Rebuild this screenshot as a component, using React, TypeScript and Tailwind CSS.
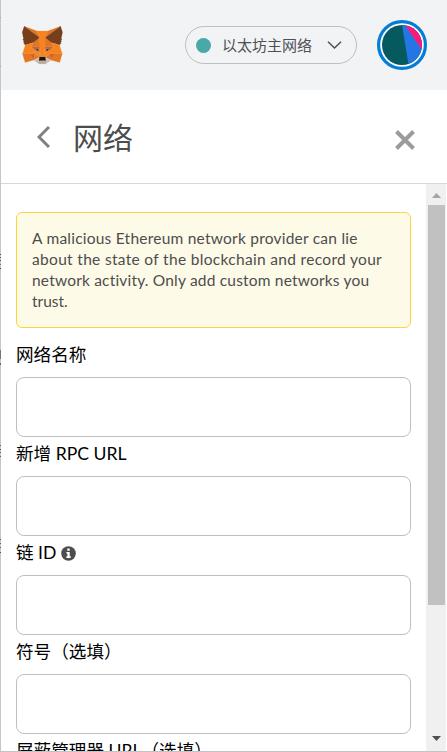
import type { ReactNode } from "react";

const FOX: [string, string][] = [
  ["#E17726", "M32.958 1L19.824 10.718L22.267 4.991L32.958 1Z"],
  ["#E27625", "M2.663 1L15.68 10.809L13.351 4.991L2.663 1Z"],
  ["#E27625", "M28.23 23.534L24.735 28.873L32.218 30.932L34.362 23.65L28.23 23.534Z"],
  ["#E27625", "M1.273 23.65L3.404 30.932L10.874 28.873L7.392 23.534L1.273 23.65Z"],
  ["#E27625", "M10.471 14.515L8.392 17.651L15.797 17.987L15.55 9.997L10.471 14.515Z"],
  ["#E27625", "M25.151 14.515L19.993 9.906L19.824 17.987L27.229 17.651L25.151 14.515Z"],
  ["#E27625", "M10.873 28.873L15.355 26.704L11.497 23.689L10.873 28.873Z"],
  ["#E27625", "M20.266 26.704L24.734 28.873L24.123 23.689L20.266 26.704Z"],
  ["#D5BFB2", "M24.734 28.873L20.266 26.704L20.629 29.609L20.59 30.841L24.734 28.873Z"],
  ["#D5BFB2", "M10.873 28.873L15.03 30.841L15.004 29.609L15.355 26.704L10.873 28.873Z"],
  ["#233447", "M15.108 21.786L11.393 20.694L14.017 19.489L15.108 21.786Z"],
  ["#233447", "M20.512 21.786L21.604 19.489L24.24 20.694L20.512 21.786Z"],
  ["#CC6228", "M10.873 28.873L11.523 23.534L7.392 23.65L10.873 28.873Z"],
  ["#CC6228", "M24.098 23.534L24.734 28.873L28.229 23.65L24.098 23.534Z"],
  ["#CC6228", "M27.229 17.651L19.824 17.987L20.512 21.786L21.604 19.489L24.24 20.694L27.229 17.651Z"],
  ["#CC6228", "M11.393 20.694L14.017 19.489L15.108 21.786L15.797 17.987L8.392 17.651L11.393 20.694Z"],
  ["#E27525", "M8.392 17.651L11.497 23.689L11.393 20.694L8.392 17.651Z"],
  ["#E27525", "M24.24 20.694L24.123 23.689L27.229 17.651L24.24 20.694Z"],
  ["#E27525", "M15.797 17.987L15.108 21.786L15.979 26.237L16.174 20.37L15.797 17.987Z"],
  ["#E27525", "M19.824 17.987L19.46 20.357L19.642 26.237L20.512 21.786L19.824 17.987Z"],
  ["#F5841F", "M20.512 21.786L19.642 26.237L20.266 26.704L24.123 23.689L24.24 20.694L20.512 21.786Z"],
  ["#F5841F", "M11.393 20.694L11.497 23.689L15.355 26.704L15.979 26.237L15.108 21.786L11.393 20.694Z"],
  ["#C0AC9D", "M20.59 30.841L20.629 29.609L20.292 29.324H15.328L15.004 29.609L15.03 30.841L10.873 28.873L12.329 30.065L15.276 32.099H20.331L23.292 30.065L24.734 28.873L20.59 30.841Z"],
  ["#161616", "M20.266 26.704L19.642 26.237H15.979L15.355 26.704L15.004 29.609L15.328 29.324H20.292L20.629 29.609L20.266 26.704Z"],
  ["#763E1A", "M33.517 11.353L34.621 5.99L32.958 1L20.266 10.394L25.151 14.515L32.049 16.525L33.569 14.748L32.907 14.268L33.959 13.309L33.153 12.686L34.206 11.882L33.517 11.353Z"],
  ["#763E1A", "M1 5.99L2.117 11.353L1.403 11.882L2.468 12.686L1.663 13.309L2.715 14.268L2.053 14.748L3.573 16.525L10.471 14.515L15.355 10.394L2.663 1L1 5.99Z"],
  ["#F5841F", "M32.049 16.525L25.151 14.515L27.229 17.651L24.123 23.689L28.23 23.637H34.362L32.049 16.525Z"],
  ["#F5841F", "M10.471 14.515L3.573 16.525L1.273 23.637H7.392L11.497 23.689L8.392 17.651L10.471 14.515Z"],
  ["#F5841F", "M19.824 17.987L20.266 10.394L22.267 4.991H13.351L15.355 10.394L15.797 17.987L15.966 20.383L15.979 26.237H19.642L19.655 20.383L19.824 17.987Z"],
];

// Slivers of the page behind the popup, visible through its left edge: y, height, colour.
const EDGE: [number, number, string][] = [
  [17, 1, "#e08a80"],
  [66, 1, "#e08a80"],
  [254, 1, "#555"],
  [257, 1, "#666"],
  [260, 1, "#555"],
  [264, 1, "#777"],
  [268, 1, "#555"],
  [350, 9, "#777"],
  [363, 2, "#666"],
  [445, 1, "#666"],
  [449, 1, "#555"],
  [452, 1, "#666"],
  [456, 1, "#666"],
  [539, 1, "#666"],
  [543, 1, "#666"],
  [547, 1, "#666"],
  [552, 1, "#555"],
];

function Fox() {
  return (
    <svg className="mt-[25px] ml-[20px] h-10 w-[42px] shrink-0" viewBox="0 0 35 33" preserveAspectRatio="none">
      {FOX.map(([fill, d]) => (
        <path key={d} d={d} fill={fill} stroke={fill} strokeWidth="0.15" />
      ))}
    </svg>
  );
}

function Avatar() {
  return (
    <svg className="mt-5 mr-5 ml-5 size-[50px] shrink-0" viewBox="0 0 50 50">
      <defs>
        <clipPath id="avatar">
          <circle cx="25" cy="25" r="20" />
        </clipPath>
      </defs>
      <circle cx="25" cy="25" r="23.4" fill="#fff" stroke="#037dd6" strokeWidth="3.2" />
      <g clipPath="url(#avatar)">
        <path d="M0 0H50V50H0Z" fill="#045a5f" />
        <path d="M24.2 0L32.4 50H50V0Z" fill="#2477e3" />
        <path d="M24.6 0L48 34H50V0Z" fill="#fc1977" />
      </g>
    </svg>
  );
}

function Field({ label }: { label: ReactNode }) {
  return (
    <label className="block">
      <span className="flex h-[39px] items-center pb-[5px] text-[17.6px] whitespace-nowrap text-black">{label}</span>
      <input className="block h-[60px] w-full rounded-lg border border-[#bbc0c5] bg-white px-4" />
    </label>
  );
}

export default function App() {
  return (
    <div className="flex h-[752px] w-[447px] overflow-hidden border-b border-[#c3c3c3] bg-white font-[Lato,'Noto_Sans_CJK_SC',sans-serif]">
      <svg className="h-[752px] w-px shrink-0 bg-[#c6c6c8]" viewBox="0 0 1 752">
        {EDGE.map(([y, h, fill]) => (
          <rect key={y} y={y} width="1" height={h} fill={fill} />
        ))}
      </svg>
      <div className="flex min-w-0 flex-1 flex-col">
        <header className="flex h-[90px] shrink-0 bg-[#f2f3f4]">
          <Fox />
          <button className="mt-[26px] ml-auto flex h-[38px] w-[172px] items-center rounded-full border border-[#bbc0c5] pr-[14px] pl-[10px]">
            <span className="size-[15px] rounded-full bg-[#4aa8a8]" />
            <span className="ml-[11px] text-[15px] whitespace-nowrap text-[#4d5156]">以太坊主网络</span>
            <svg className="ml-auto h-2 w-[15px]" viewBox="0 0 15 8" fill="none" stroke="#4d5156" strokeWidth="1.5">
              <path d="M1 .8L7.5 7L14 .8" />
            </svg>
          </button>
          <Avatar />
        </header>
        <div className="flex h-[94px] shrink-0 items-center border-b border-[#d2d8dd]">
          <svg className="ml-9 h-[22px] w-[13px]" viewBox="0 0 13 22" fill="none" stroke="#808080" strokeWidth="3">
            <path d="M12 1L2 11L12 21" />
          </svg>
          <h1 className="ml-[23px] text-[30px] leading-none font-normal text-[#4d4d4d]">网络</h1>
          <svg className="mt-[7px] mr-[32px] ml-auto size-5" viewBox="0 0 20 20" stroke="#9b9b9b" strokeWidth="4">
            <path d="M1.5 1.5L18.5 18.5M18.5 1.5L1.5 18.5" />
          </svg>
        </div>
        <div className="flex min-h-0 flex-1">
          <main className="h-full w-[425px] overflow-hidden px-[15px] pt-7">
            <div className="mb-[10px] flex h-[116px] w-[395px] flex-col rounded-[6px] border border-[#ffd33d] bg-[#fefae8] px-[15px] py-[15px] text-[15.5px] leading-[21px] whitespace-nowrap text-[#4d4d4d]">
              <span className="tracking-[0.23px]">A malicious Ethereum network provider can lie</span>
              <span className="tracking-[0.32px]">about the state of the blockchain and record your</span>
              <span className="tracking-[0.19px]">network activity. Only add custom networks you</span>
              <span>trust.</span>
            </div>
            <Field label="网络名称" />
            <Field label="新增 RPC URL" />
            <Field
              label={
                <>
                  链 ID
                  <svg className="ml-[5px] size-[15px]" viewBox="0 0 15 15">
                    <circle cx="7.5" cy="7.5" r="7.3" fill="#4d4d4d" />
                    <path d="M6.3 2.5H8.7V4.8H6.3ZM5.4 6H8.7V10.3H9.7V12H5.4V10.3H6.4V7.6H5.4Z" fill="#fff" />
                  </svg>
                </>
              }
            />
            <Field label="符号（选填）" />
            <Field label="屏蔽管理器 URL（选填）" />
          </main>
          <div className="flex w-5 flex-col items-center bg-[#f0f0f0]">
            <svg className="h-[21px] w-[9px]" viewBox="0 0 9 21">
              <path d="M0 14L4.5 9L9 14Z" fill="#a3a3a3" />
            </svg>
            <div className="h-[400px] w-[17px] bg-[#c1c1c1]" />
            <svg className="mt-auto h-[21px] w-[9px]" viewBox="0 0 9 21">
              <path d="M0 6L4.5 11L9 6Z" fill="#505050" />
            </svg>
          </div>
        </div>
      </div>
    </div>
  );
}
